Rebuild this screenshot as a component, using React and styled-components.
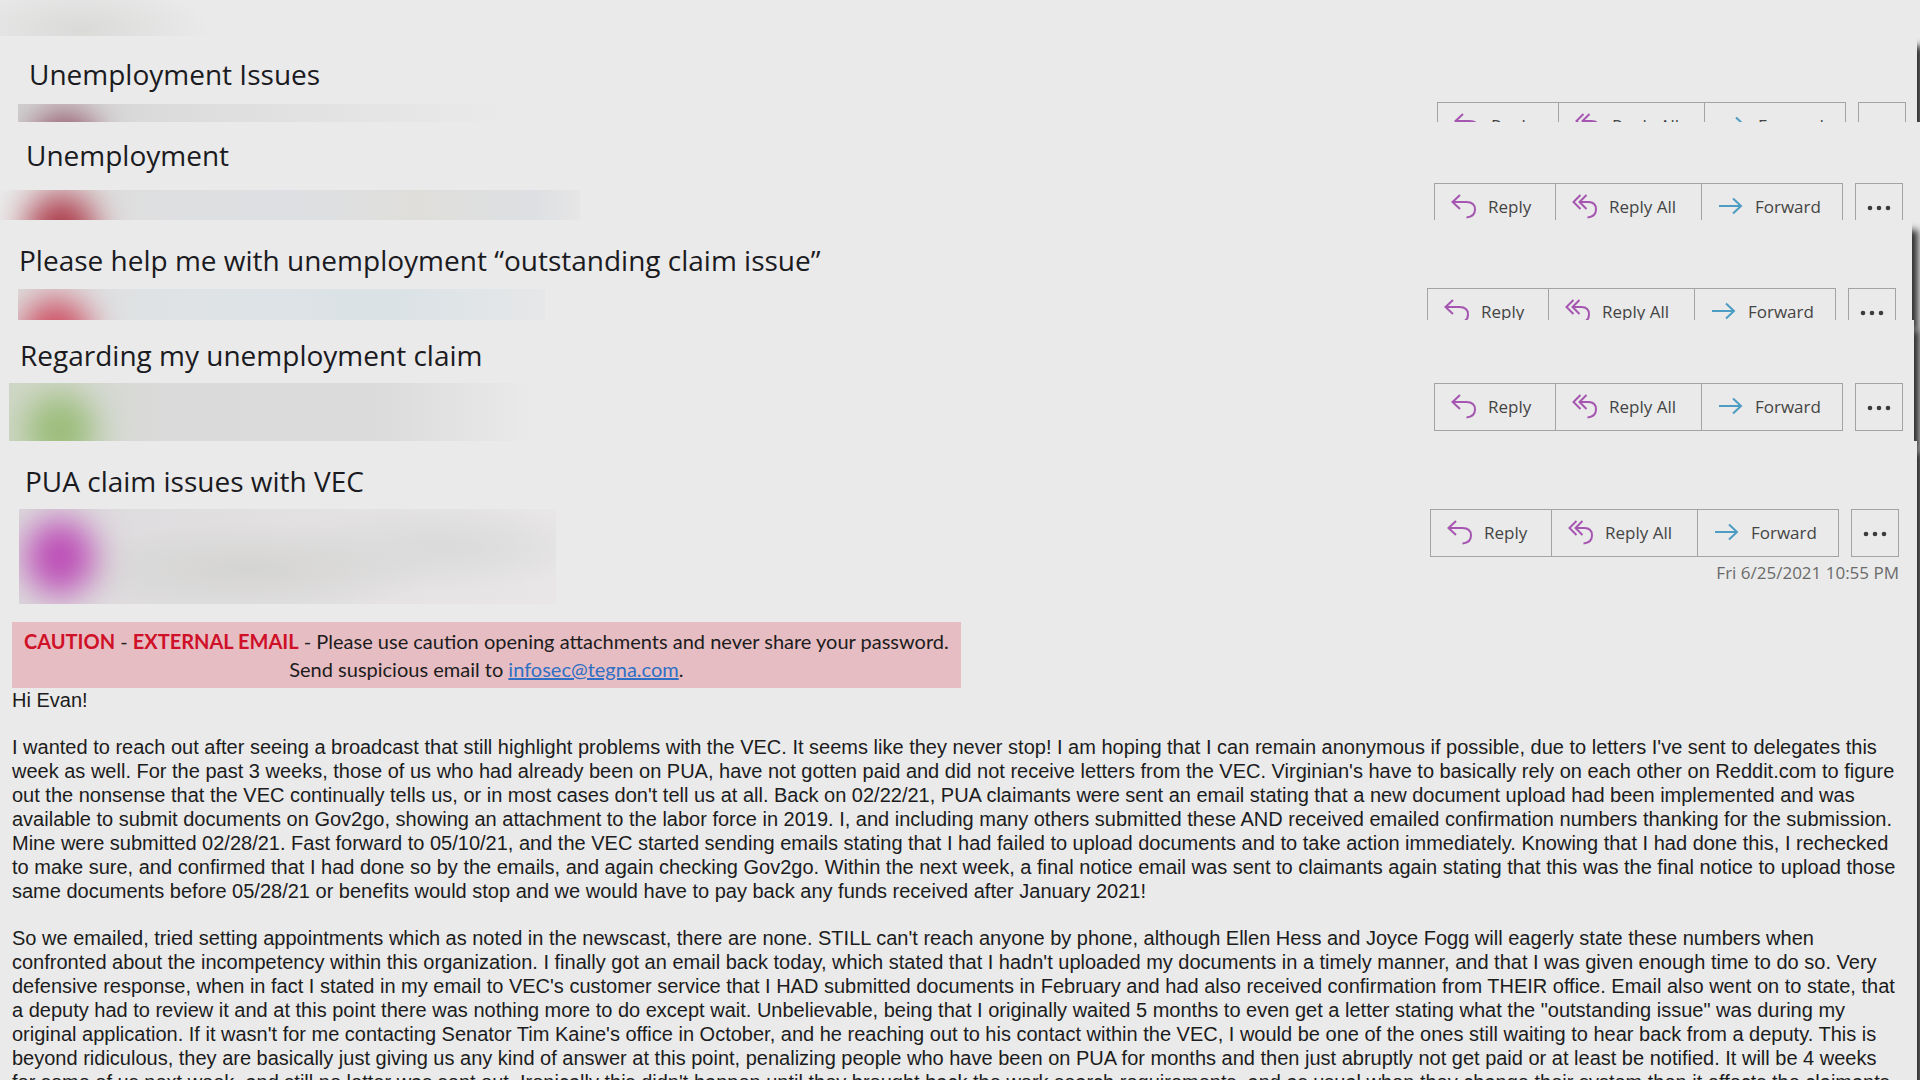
import React from 'react';
import styled, { createGlobalStyle } from 'styled-components';

const GlobalStyle = createGlobalStyle`
  * {
    box-sizing: border-box;
  }

  body {
    margin: 0;
    background: #eaeaea;
    color: #1c1c1c;
    font-family: 'Liberation Sans', Arial, sans-serif;
  }
`;

const Stack = styled.main`
  height: 100vh;
  overflow: hidden;
`;

// bottom of a message that sits behind the others
const Sliver = styled.div`
  height: 36px;
  background: radial-gradient(130px 50px at 80px 30px, #dadad9, rgba(234, 234, 234, 0));
`;

const Card = styled.article`
  height: ${({ $height }) => ($height ? `${$height}px` : 'auto')};
  margin-right: ${({ $edge }) => $edge}px;
  padding-top: ${({ $top }) => $top}px;
  overflow: hidden;
  background: #eaeaea;
  box-shadow: ${({ $edge }) => ($edge ? '6px 10px 7px rgba(0, 0, 0, 0.8)' : 'none')};
`;

const Subject = styled.h2`
  margin: 0;
  padding-left: ${({ $left }) => $left}px;
  font-family: 'Open Sans', 'Segoe UI', sans-serif;
  font-size: 28px;
  font-weight: 400;
  line-height: 36px;
  color: #1b1b1f;
`;

const Header = styled.header`
  display: flex;
  justify-content: space-between;
  align-items: flex-start;
  padding: 10px ${({ $right }) => $right}px 0 ${({ $left }) => $left}px;
`;

// sender details are kept unreadable, only the avatar colour shows through
const Sender = styled.div`
  width: ${({ $width }) => $width}px;
  height: 95px;
  margin-top: ${({ $drop }) => $drop || 0}px;
  overflow: hidden;
  background: ${({ $blur }) => $blur};

  &::before {
    content: '';
    display: block;
    width: 70px;
    height: 76px;
    margin: ${({ $drop }) => 10 - ($drop || 0)}px 0 0 ${({ $avatarLeft }) => $avatarLeft}px;
    border-radius: 50%;
    background: ${({ $avatar }) => $avatar};
    filter: blur(17px);
  }
`;

const Actions = styled.div`
  display: flex;
  flex-direction: column;
  align-items: flex-end;
`;

const Toolbar = styled.div`
  display: flex;
  gap: 12px;
`;

const ButtonGroup = styled.div`
  display: flex;
  border: 1px solid #a3a3a3;
`;

const ActionButton = styled.button`
  display: flex;
  align-items: center;
  gap: 12px;
  width: ${({ $width }) => $width}px;
  height: 46px;
  padding: 0 0 2px 16px;
  border: 0;
  background: transparent;
  font-family: 'Open Sans', 'Segoe UI', sans-serif;
  font-size: 17px;
  color: #444;
  white-space: nowrap;

  & + & {
    border-left: 1px solid #a3a3a3;
  }
`;

const MoreButton = styled.button`
  width: 48px;
  height: 48px;
  padding: 0 0 2px;
  border: 1px solid #a3a3a3;
  background: transparent;
`;

const Sent = styled.time`
  margin-top: 2px;
  font-family: 'Open Sans', 'Segoe UI', sans-serif;
  font-size: 17px;
  line-height: 28px;
  color: #6a6a6a;
`;

const Message = styled.div`
  padding: 18px 12px 0;
  font-size: 20px;
  line-height: 24px;

  p {
    margin: 0 0 23px;
    white-space: nowrap;
  }
`;

const Caution = styled.div`
  width: fit-content;
  padding: 5px 12px;
  background: #e6bdc3;
  font-family: Lato, Calibri, sans-serif;
  font-size: 20px;
  line-height: 28px;
  text-align: center;

  strong {
    color: #cf1027;
  }

  a {
    color: #2f6fc4;
  }
`;

const ReplyIcon = () => (
  <svg width="25" height="26" viewBox="0 0 25 26" fill="none" stroke="#a556b0" strokeWidth="2">
    <path d="M9 2 1.500 9 9 16M1.500 9H15.500C21 9 24 12 24 16.500S21 24 15.500 24.500" />
  </svg>
);

const ReplyAllIcon = () => (
  <svg width="25" height="26" viewBox="0 0 25 26" fill="none" stroke="#a556b0" strokeWidth="2">
    <path d="M8.500 2 1.500 9 8.500 16M14.500 2 7.500 9 14.500 16M7.500 9H16.500C21.500 9 24 12 24 16.500S21 24 15.500 24.500" />
  </svg>
);

const ForwardIcon = () => (
  <svg width="25" height="26" viewBox="0 0 25 26" fill="none" stroke="#4c9cc4" strokeWidth="2">
    <path d="M1 13H23M15 5.500 23 13 15 20.500" />
  </svg>
);

const MoreIcon = () => (
  <svg width="24" height="6" viewBox="0 0 24 6" fill="#3c3c3c">
    <circle cx="3" cy="3" r="2.300" />
    <circle cx="12" cy="3" r="2.300" />
    <circle cx="21" cy="3" r="2.300" />
  </svg>
);

const messages = [
  {
    subject: 'Unemployment Issues',
    height: 86,
    edge: 3,
    top: 20,
    titleLeft: 29,
    senderLeft: 18,
    right: 11,
    width: 490,
    drop: 2,
    avatar: '#8c4a60',
    avatarLeft: 12,
    blur: 'linear-gradient(90deg, #d2d2d2, #dedede 40%, #eaeaea)'
  },
  {
    subject: 'Unemployment',
    height: 98,
    edge: 0,
    top: 15,
    titleLeft: 26,
    senderLeft: 0,
    right: 17,
    width: 580,
    drop: 7,
    avatar: '#ac3848',
    avatarLeft: 26,
    blur: 'linear-gradient(90deg, #eaeaea, #dedede 15%, #dddfe2 50%, #dfdedb 72%, #dddfe2 92%, #e6e6e6)'
  },
  {
    subject: 'Please help me with unemployment “outstanding claim issue”',
    height: 100,
    edge: 8,
    top: 22,
    titleLeft: 19,
    senderLeft: 18,
    right: 16,
    width: 527,
    drop: 1,
    avatar: '#cc485c',
    avatarLeft: 3,
    blur: 'linear-gradient(90deg, #dedede, #dfe3e6 35%, #dae2e6 70%, #e6e7e8)'
  },
  {
    subject: 'Regarding my unemployment claim',
    height: 121,
    edge: 6,
    top: 17,
    titleLeft: 20,
    senderLeft: 9,
    right: 11,
    width: 525,
    sent: 'Fri 6/25/2021 11:09 PM',
    avatar: '#9abc78',
    avatarLeft: 16,
    blur: 'linear-gradient(90deg, #d0d8c8, #dadada 30%, #dbdbdb 70%, #eaeaea)'
  },
  {
    subject: 'PUA claim issues with VEC',
    edge: 3,
    top: 22,
    titleLeft: 25,
    senderLeft: 19,
    right: 18,
    width: 537,
    sent: 'Fri 6/25/2021 10:55 PM',
    avatar: '#bc4cb6',
    avatarLeft: 6,
    blur: 'radial-gradient(190px 46px at 230px 60px, #d4d4d2, rgba(215, 215, 213, 0)), radial-gradient(160px 44px at 420px 38px, #dadada, rgba(220, 220, 220, 0)), linear-gradient(90deg, #dcdadc, #e2e0e1 50%, #e8e6e7)'
  }
];

const EmailCard = ({ message, children }) => (
  <Card $height={message.height} $edge={message.edge} $top={message.top}>
    <Subject $left={message.titleLeft}>{message.subject}</Subject>
    <Header $left={message.senderLeft} $right={message.right}>
      <Sender
        $width={message.width}
        $drop={message.drop}
        $blur={message.blur}
        $avatar={message.avatar}
        $avatarLeft={message.avatarLeft}
      />
      <Actions>
        <Toolbar>
          <ButtonGroup>
            <ActionButton $width={120}><ReplyIcon />Reply</ActionButton>
            <ActionButton $width={146}><ReplyAllIcon />Reply All</ActionButton>
            <ActionButton $width={141}><ForwardIcon />Forward</ActionButton>
          </ButtonGroup>
          <MoreButton aria-label="More actions"><MoreIcon /></MoreButton>
        </Toolbar>
        {message.sent && <Sent>{message.sent}</Sent>}
      </Actions>
    </Header>
    {children}
  </Card>
);

function App() {
  const behind = messages.slice(0, -1);
  const front = messages[messages.length - 1];

  return (
    <>
      <GlobalStyle />
      <Stack>
        <Sliver />
        {behind.map((message) => (
          <EmailCard key={message.subject} message={message} />
        ))}
        <EmailCard message={front}>
          <Message>
            <Caution>
              <strong>CAUTION</strong> - <strong>EXTERNAL EMAIL</strong> - Please use caution opening attachments and never share your password.
              <br />
              Send suspicious email to <a href="mailto:infosec@tegna.com">infosec@tegna.com</a>.
            </Caution>
            <p>Hi Evan!</p>
            <p>
              I wanted to reach out after seeing a broadcast that still highlight problems with the VEC. It seems like they never stop! I am hoping that I can remain anonymous if possible, due to letters I've sent to delegates this<br />
              week as well. For the past 3 weeks, those of us who had already been on PUA, have not gotten paid and did not receive letters from the VEC. Virginian's have to basically rely on each other on Reddit.com to figure<br />
              out the nonsense that the VEC continually tells us, or in most cases don't tell us at all. Back on 02/22/21, PUA claimants were sent an email stating that a new document upload had been implemented and was<br />
              available to submit documents on Gov2go, showing an attachment to the labor force in 2019. I, and including many others submitted these AND received emailed confirmation numbers thanking for the submission.<br />
              Mine were submitted 02/28/21. Fast forward to 05/10/21, and the VEC started sending emails stating that I had failed to upload documents and to take action immediately. Knowing that I had done this, I rechecked<br />
              to make sure, and confirmed that I had done so by the emails, and again checking Gov2go. Within the next week, a final notice email was sent to claimants again stating that this was the final notice to upload those<br />
              same documents before 05/28/21 or benefits would stop and we would have to pay back any funds received after January 2021!
            </p>
            <p>
              So we emailed, tried setting appointments which as noted in the newscast, there are none. STILL can't reach anyone by phone, although Ellen Hess and Joyce Fogg will eagerly state these numbers when<br />
              confronted about the incompetency within this organization. I finally got an email back today, which stated that I hadn't uploaded my documents in a timely manner, and that I was given enough time to do so. Very<br />
              defensive response, when in fact I stated in my email to VEC's customer service that I HAD submitted documents in February and had also received confirmation from THEIR office. Email also went on to state, that<br />
              a deputy had to review it and at this point there was nothing more to do except wait. Unbelievable, being that I originally waited 5 months to even get a letter stating what the "outstanding issue" was during my<br />
              original application. If it wasn't for me contacting Senator Tim Kaine's office in October, and he reaching out to his contact within the VEC, I would be one of the ones still waiting to hear back from a deputy. This is<br />
              beyond ridiculous, they are basically just giving us any kind of answer at this point, penalizing people who have been on PUA for months and then just abruptly not get paid or at least be notified. It will be 4 weeks<br />
              for some of us next week, and still no letter was sent out. Ironically this didn't happen until they brought back the work search requirements, and as usual when they change their system then it effects the claimants
            </p>
          </Message>
        </EmailCard>
      </Stack>
    </>
  );
}

export default App;
